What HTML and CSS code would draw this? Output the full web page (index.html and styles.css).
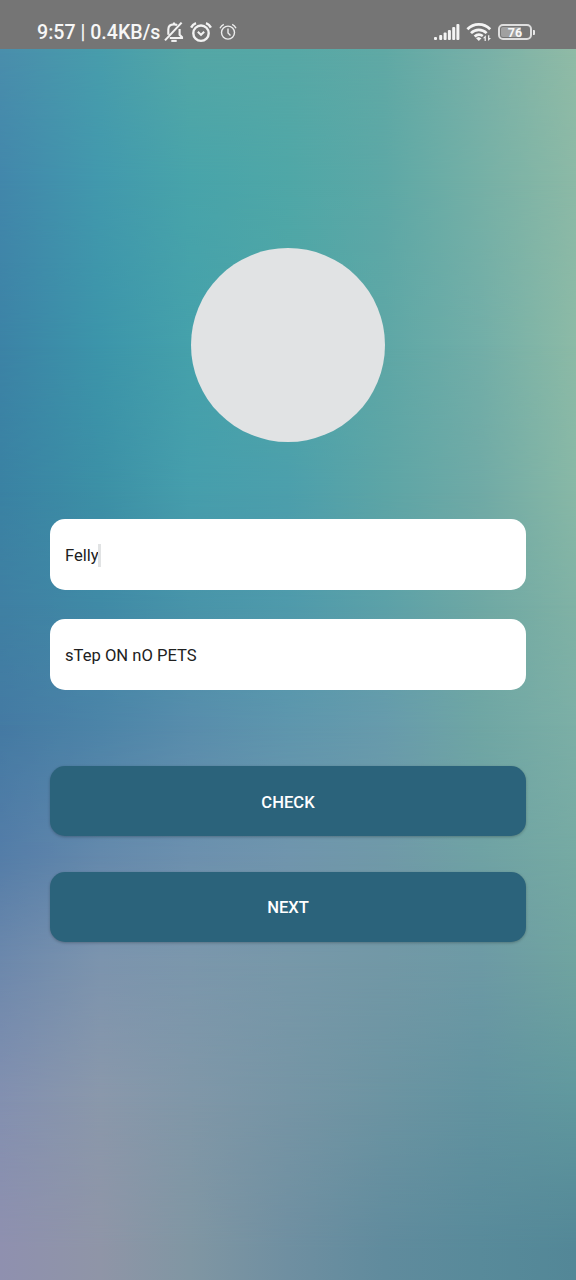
FILE: index.html
```html
<!DOCTYPE html>
<html lang="en">
<head>
<meta charset="utf-8">
<title>Palindrome</title>
<link rel="stylesheet" href="styles.css">
</head>
<body>
<div class="screen">
  <div class="backdrop" aria-hidden="true">
    <div class="wash wash-1"></div>
    <div class="wash wash-2"></div>
    <div class="wash wash-3"></div>
    <div class="wash wash-4"></div>
    <div class="wash wash-5"></div>
    <div class="wash wash-6"></div>
    <div class="wash wash-7"></div>
    <div class="wash wash-8"></div>
    <div class="wash wash-9"></div>
    <div class="wash wash-10"></div>
  </div>
  <header class="status">
    <div class="status-left">
      <span class="status-text">9:57 | 0.4KB/s</span>
      <svg class="bell" width="20" height="22" viewBox="0 0 20 22" fill="none" stroke="#f2f2f2" stroke-width="2.1">
        <path d="M4.3 13.8V8.6C4.3 5.4 6.6 3.4 10 3.4c1.2 0 2.2.2 3.1.8M15.6 8v5.8l2.4 2.4v.8H5.8M10 3.5V1.5M1 19.4 17.6 1.6"/>
        <path d="M7.3 19.9h5.4"/>
      </svg>
      <svg class="alarm" width="22" height="21" viewBox="0 0 22 21" fill="none" stroke="#f2f2f2" stroke-width="2.4">
        <circle cx="11" cy="11.2" r="7.7"/>
        <path d="m7.8 9.8 3.2 3 3.2-3" stroke-width="2"/>
        <path d="M1.1 5.6C2.1 3.6 3.8 2 6 1.2M20.9 5.6C19.9 3.6 18.2 2 16 1.2"/>
      </svg>
      <svg class="alarm-small" width="18" height="18" viewBox="0 0 18 18" fill="none" stroke="#ececec" stroke-width="1.4">
        <circle cx="9" cy="9.6" r="6.5"/>
        <path d="M9 5.6V10l2.5 2.4M1 5.2C1.8 3.4 3.1 2.1 4.8 1.3M17 5.2C16.2 3.4 14.9 2.1 13.2 1.3"/>
      </svg>
    </div>
    <div class="status-right">
      <svg width="26" height="18" viewBox="0 0 26 18" fill="#f4f4f4">
        <rect x="0" y="14" width="3" height="3" rx="1"/><rect x="5.2" y="12" width="3" height="5" rx="1"/><rect x="9.6" y="9.6" width="3" height="7.4" rx="1"/><rect x="13.9" y="7" width="3" height="10" rx="1"/><rect x="18.2" y="4" width="3" height="13" rx="1"/><rect x="22.4" y="1" width="3" height="16" rx="1"/>
      </svg>
      <svg class="wifi" width="26" height="20" viewBox="0 0 26 20" fill="none" stroke="#f4f4f4" stroke-width="2.7">
        <path d="M1.4 7.3C7.7.7 17.9.7 24.2 7.3M5 11.1c4.4-4.4 11.2-4.4 15.6 0M8.6 14.6c2.5-2.3 5.6-2.4 8.2-.6"/>
        <path d="m9.9 16 2.9-1.1 2.7 1.3-2.7 2.9z" fill="#f4f4f4" stroke="none"/>
        <path d="m16.9 16.3 2.9-3v5.8h-1.2v-2.8zM25 16l-2.9 3v-5.8h1.2V16z" fill="#f4f4f4" stroke="none"/>
      </svg>
      <div class="battery"><span>76</span></div>
    </div>
  </header>
  <main class="content">
    <div class="avatar"></div>
    <div class="field"><span>Felly</span><i class="caret"></i></div>
    <div class="field field-second"><span>sTep ON nO PETS</span></div>
    <button class="action" type="button">CHECK</button>
    <button class="action action-next" type="button">NEXT</button>
  </main>
</div>
</body>
</html>
```
FILE: styles.css
```css
* { box-sizing: border-box; }

body {
  margin: 0;
  font-family: Roboto, "Liberation Sans", sans-serif;
}

.screen {
  position: relative;
  width: 576px;
  height: 1280px;
  overflow: hidden;
  isolation: isolate;
}

/* Colour mesh: each wash fades in from "from" to "to" over the previous one. */
.backdrop, .wash {
  position: absolute;
  inset: 0;
}

.backdrop { z-index: -1; }

.wash {
  background: linear-gradient(90deg, var(--a), var(--b) 17.4%, var(--c) 33%, var(--d) 50%, var(--e) 66.8%, var(--f) 83.3%, var(--g));
  mask-image: linear-gradient(180deg, transparent var(--from), #000 var(--to));
}

.wash-1 { --a: #4a8eac; --b: #489dac; --c: #54a7a6; --d: #57a8a6; --e: #60a9a5; --f: #78b0a8; --g: #90bba6; mask-image: none; }
.wash-2 { --a: #4287ab; --b: #4299ad; --c: #48a4aa; --d: #4fa7a7; --e: #5da8a6; --f: #75b0a6; --g: #8cb9a6; --from: 49px; --to: 180px; }
.wash-3 { --a: #3c83a6; --b: #3c95aa; --c: #45a1ab; --d: #4ea6a7; --e: #5ea7a6; --f: #72aea8; --g: #8cbaa6; --from: 180px; --to: 345px; }
.wash-4 { --a: #3a82a3; --b: #3c90a6; --c: #469eac; --d: #4c9fac; --e: #5da5a6; --f: #70aaa6; --g: #88b8a6; --from: 345px; --to: 490px; }
.wash-5 { --a: #3f80a3; --b: #408aa6; --c: #4894a9; --d: #4f9aab; --e: #5ca1a8; --f: #6fa8a4; --g: #80b2a5; --from: 490px; --to: 605px; }
.wash-6 { --a: #447aa3; --b: #4c84a8; --c: #588dac; --d: #5e96ad; --e: #679bac; --f: #6fa6a4; --g: #7cafa6; --from: 605px; --to: 725px; }
.wash-7 { --a: #547da8; --b: #6489ac; --c: #6c90ae; --d: #7095ad; --e: #7099a8; --f: #6fa2a4; --g: #76aaa3; --from: 725px; --to: 855px; }
.wash-8 { --a: #6c88ac; --b: #7c94ae; --c: #7b97ac; --d: #7798a9; --e: #7298a6; --f: #6d9aa5; --g: #70a4a0; --from: 855px; --to: 960px; }
.wash-9 { --a: #8390b0; --b: #8a98ab; --c: #8097a8; --d: #7695a5; --e: #6c94a2; --f: #6293a0; --g: #60989e; --from: 960px; --to: 1100px; }
.wash-10 { --a: #8f90af; --b: #8f95a7; --c: #8096a3; --d: #6f8fa1; --e: #608b9d; --f: #588a9a; --g: #538797; --from: 1100px; --to: 1250px; }

.status {
  display: flex;
  justify-content: space-between;
  height: 49px;
  padding: 15px 44px 0 37px;
  background: #757575;
  color: #f7f7f7;
}

.status-left, .status-right {
  display: flex;
  align-items: center;
  height: 34px;
}

.status-text {
  width: 123px;
  padding-top: 1px;
  font-size: 19.6px;
  font-weight: 500;
  line-height: 34px;
  white-space: nowrap;
}

.bell { margin-left: 4px; }
.alarm { margin-left: 6px; }
.alarm-small { margin-left: 7px; }
.wifi { margin-left: 6px; }

.battery {
  position: relative;
  display: flex;
  align-items: center;
  justify-content: center;
  width: 34px;
  height: 16px;
  margin-left: 6px;
  border: 2px solid #dedede;
  border-radius: 5px;
  background: linear-gradient(90deg, #a0a0a0 70%, #757575 70%);
  background-clip: content-box;
  padding: 1px;
  font-size: 12.5px;
  font-weight: 700;
}

.battery::after {
  content: "";
  position: absolute;
  top: 3.5px;
  right: -5px;
  width: 2px;
  height: 5px;
  border-radius: 0 1px 1px 0;
  background: #e8e8e8;
}

.content {
  display: flex;
  flex-direction: column;
  align-items: center;
  padding: 199px 50px 0;
}

.avatar {
  width: 194px;
  height: 194px;
  border-radius: 50%;
  background: #e1e3e4;
}

.field {
  display: flex;
  align-items: center;
  width: 476px;
  height: 71px;
  margin-top: 77px;
  padding: 1px 15px 0;
  border-radius: 15px;
  background: #fff;
  color: #212121;
  font-size: 16.6px;
}

.field-second { margin-top: 29px; }

.caret {
  width: 3px;
  height: 23px;
  margin-left: -1px;
  background: #e1e3e4;
}

.action {
  width: 476px;
  height: 70px;
  margin-top: 76px;
  padding: 2px 0 0;
  border: 0;
  border-radius: 15px;
  background: #2b637b;
  box-shadow: 0 1px 3px rgba(0, 0, 0, .25);
  color: #fff;
  font: 500 16.6px Roboto, "Liberation Sans", sans-serif;
}

.action-next { margin-top: 35.5px; }
```
